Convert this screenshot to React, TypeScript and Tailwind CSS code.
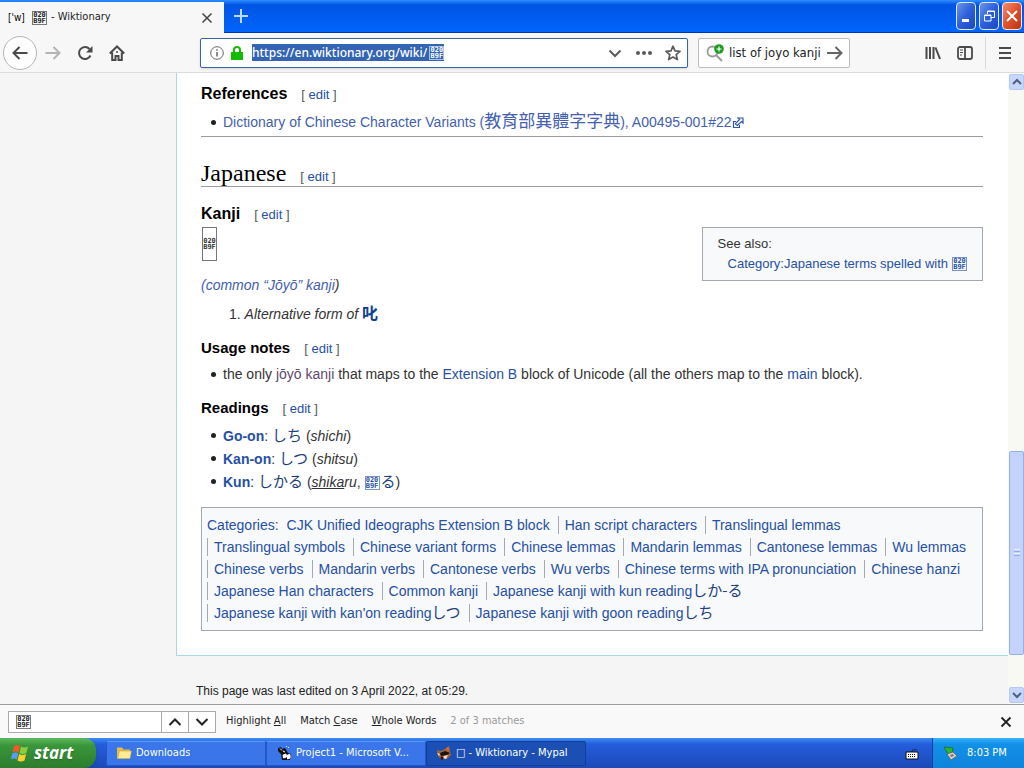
import clsx from "clsx";
import type { ReactNode } from "react";

const UI_FONT = "font-['DejaVu_Sans_Condensed','DejaVu_Sans',sans-serif]";

const CATEGORIES: { label: string; kana?: string }[] = [
  { label: "CJK Unified Ideographs Extension B block" },
  { label: "Han script characters" },
  { label: "Translingual lemmas" },
  { label: "Translingual symbols" },
  { label: "Chinese variant forms" },
  { label: "Chinese lemmas" },
  { label: "Mandarin lemmas" },
  { label: "Cantonese lemmas" },
  { label: "Wu lemmas" },
  { label: "Chinese verbs" },
  { label: "Mandarin verbs" },
  { label: "Cantonese verbs" },
  { label: "Wu verbs" },
  { label: "Chinese terms with IPA pronunciation" },
  { label: "Chinese hanzi" },
  { label: "Japanese Han characters" },
  { label: "Common kanji" },
  { label: "Japanese kanji with kun reading", kana: "しか-る" },
  { label: "Japanese kanji with kan'on reading", kana: "しつ" },
  { label: "Japanese kanji with goon reading", kana: "しち" },
];

// Hex box drawn for a code point that no font covers
function HexGlyph({ className }: { className?: string }) {
  return (
    <span
      className={clsx(
        "inline-flex h-[14px] w-[15px] shrink-0 flex-col items-center justify-center border border-current/60 font-['DejaVu_Sans_Mono',monospace] text-[7px] font-bold not-italic leading-[6px]",
        className,
      )}
    >
      <span>020</span>
      <span>B9F</span>
    </span>
  );
}

function Link({ children, className }: { children: ReactNode; className?: string }) {
  return (
    <a href="#" className={clsx(className ?? "text-[#2650a4]")}>
      {children}
    </a>
  );
}

function Edit() {
  return (
    <span className="font-['Liberation_Sans',Arial,sans-serif] text-[13px] font-normal text-[#54595d]">
      [ <Link>edit</Link> ]
    </span>
  );
}

function Heading({ children, className }: { children: ReactNode; className?: string }) {
  return (
    <h3 className={clsx("flex h-[26px] items-baseline gap-[14px] font-bold leading-[26px] text-black", className)}>
      {children}
      <Edit />
    </h3>
  );
}

function Bullet({ children, className = "h-[22px]" }: { children: ReactNode; className?: string }) {
  return (
    <li className={clsx("flex items-center", className)}>
      <span className="mr-[7px] ml-[10px] size-[5px] rounded-full bg-[#202122]" />
      <div>{children}</div>
    </li>
  );
}

function Kana({ children }: { children: ReactNode }) {
  return <span className="font-['Noto_Sans_CJK_JP',sans-serif] text-[15px] leading-none text-[#1d3f80]">{children}</span>;
}

function TabStrip() {
  return (
    <div className="flex h-[33px] shrink-0 bg-linear-to-b from-[#2f8cff] via-[#0054e3] via-15% to-[#0066ff]">
      <div className="mt-[2px] flex w-56 items-center bg-[#f7f7f8] px-2 text-[11px] text-[#222]">
        <span className="w-4 text-[10px] whitespace-nowrap text-black">['w]</span>
        <HexGlyph className="mr-1 ml-2" />
        <span>- Wiktionary</span>
        <button aria-label="Close tab" className="ml-auto">
          <svg viewBox="0 0 18 18" className="size-[18px]" fill="none" stroke="#444" strokeWidth="1.5">
            <path d="M4.500 4.500l9 9M13.500 4.500l-9 9" />
          </svg>
        </button>
      </div>
      <div className="flex flex-1 border-b border-[#0038a8] pl-2">
        <button aria-label="New tab">
          <svg viewBox="0 0 18 18" className="size-[18px]" fill="none" stroke="#b9dcff" strokeWidth="2">
            <path d="M9 2v14M2 9h14" />
          </svg>
        </button>
        <div className="ml-auto flex gap-[3px] pt-[2px] pr-[2px]">
          <button aria-label="Minimize" className="h-7 w-5 rounded border border-[#dfe9ff] bg-linear-to-br from-[#6c94ee] via-[#2b5fd9] to-[#1c48c4]">
            <svg viewBox="0 0 18 26"><path d="M5 16h7v3H5z" fill="#fff" /></svg>
          </button>
          <button aria-label="Restore" className="h-7 w-5 rounded border border-[#dfe9ff] bg-linear-to-br from-[#6c94ee] via-[#2b5fd9] to-[#1c48c4]">
            <svg viewBox="0 0 18 26" fill="none" stroke="#fff">
              <path d="M7.500 11V8h7v6.500H11M7 8.500h8M4.500 12h6.500v6H4.500zM4 12.500h7" />
            </svg>
          </button>
          <button aria-label="Close" className="h-7 w-5 rounded border border-[#ffe4dc] bg-linear-to-br from-[#ee8b6c] via-[#e0512b] to-[#b83410]">
            <svg viewBox="0 0 18 26" fill="none" stroke="#fff" strokeWidth="2">
              <path d="M4 8l10 10M14 8L4 18" />
            </svg>
          </button>
        </div>
      </div>
    </div>
  );
}

function NavBar() {
  return (
    <div className="flex h-10 shrink-0 items-center border-b border-[#dcdcdc] bg-[#f7f7f8] pr-3 pl-[3px] text-[#4a4a4a]">
      <button aria-label="Back" className="flex size-[34px] items-center justify-center rounded-full border border-[#b5b5b5] bg-[#fdfdfd]">
        <svg viewBox="0 0 16 16" className="size-4" fill="none" stroke="currentColor" strokeWidth="2">
          <path d="M15.500 8H1.500M7.500 2L1.500 8l6 6" />
        </svg>
      </button>
      <div className="ml-2 flex gap-4">
        <button aria-label="Forward" className="text-[#b4b4b4]">
          <svg viewBox="0 0 16 16" className="size-4" fill="none" stroke="currentColor" strokeWidth="2">
            <path d="M.5 8h14M8.500 2l6 6-6 6" />
          </svg>
        </button>
        <button aria-label="Reload">
          <svg viewBox="0 0 16 16" className="size-4" fill="none" stroke="currentColor" strokeWidth="2">
            <path d="M13.500 10.500A6 6 0 1 1 12.500 4" />
            <path d="M15.500 1v6.500H9z" fill="currentColor" stroke="none" />
          </svg>
        </button>
        <button aria-label="Home">
          <svg viewBox="0 0 16 16" className="size-4" fill="none" stroke="currentColor" strokeWidth="2">
            <path d="M.8 8.500L8 1.500l7.200 7M3.200 7.500V15h3.300v-4h3v4h3.300V7.500" />
            <path d="M7 7h2" strokeWidth="1.500" />
          </svg>
        </button>
      </div>
      <div className="ml-[75px] flex h-[30px] flex-1 items-center rounded-xs border border-[#3465a8] bg-white pr-1.5 pl-[9px] shadow-sm">
        <svg viewBox="0 0 14 14" className="size-[14px]" fill="none" stroke="#666">
          <circle cx="7" cy="7" r="6.300" />
          <path d="M7 6v4.500M7 3.200v1.600" strokeWidth="1.500" />
        </svg>
        <svg viewBox="0 0 12 14" className="mr-[9px] ml-[7px] h-[14px] w-3">
          <path d="M0 6h12v8H0z" fill="#12bc00" />
          <path d="M3 7V4a3 3 0 0 1 6 0v3" fill="none" stroke="#12bc00" strokeWidth="2" />
        </svg>
        <input
          aria-label="Address"
          defaultValue="https://en.wiktionary.org/wiki/"
          className="field-sizing-content h-[17px] bg-[#3464b4] font-['Noto_Sans',sans-serif] text-xs font-medium text-white outline-none"
        />
        <span className="flex h-[17px] items-center bg-[#3464b4] pl-0.5 text-white">
          <HexGlyph />
        </span>
        <div className="ml-auto flex items-center gap-3 text-[#5a5a5a]">
          <button aria-label="Show history">
            <svg viewBox="0 0 16 16" className="size-4" fill="none" stroke="currentColor" strokeWidth="2">
              <path d="M2.500 5.500L8 11l5.500-5.500" />
            </svg>
          </button>
          <button aria-label="Page actions">
            <svg viewBox="0 0 18 16" className="h-4 w-[18px]" fill="currentColor">
              <circle cx="3" cy="8" r="2" />
              <circle cx="9" cy="8" r="2" />
              <circle cx="15" cy="8" r="2" />
            </svg>
          </button>
          <button aria-label="Bookmark this page">
            <svg viewBox="0 0 16 16" className="size-4" fill="none" stroke="currentColor" strokeWidth="1.700" strokeLinejoin="round">
              <path d="M8 1.200l2 4.600 5 .5-3.800 3.300 1.200 5L8 12l-4.400 2.600 1.200-5L1 6.300l5-.5z" />
            </svg>
          </button>
        </div>
      </div>
      <div className="ml-[10px] flex h-[30px] w-[152px] items-center rounded-xs border border-[#bdbdbd] bg-white px-1.5">
        <svg viewBox="0 0 20 18" className="h-[18px] w-5 shrink-0" fill="none">
          <circle cx="7.500" cy="7.500" r="5" stroke="#999" strokeWidth="1.800" />
          <path d="M11 11l6 6" stroke="#999" strokeWidth="2" />
          <circle cx="14" cy="5" r="4.800" fill="#1f9b1f" />
          <path d="M14 2.500v5M11.500 5h5" stroke="#fff" strokeWidth="1.200" />
        </svg>
        <input aria-label="Search" defaultValue="list of joyo kanji" className="ml-1 w-0 flex-1 text-[13px] text-[#222] outline-none" />
        <button aria-label="Go" className="text-[#666]">
          <svg viewBox="0 0 16 16" className="size-4" fill="none" stroke="currentColor" strokeWidth="2">
            <path d="M0 8h14.500M8.500 2l6 6-6 6" />
          </svg>
        </button>
      </div>
      <button aria-label="Library" className="ml-[75px]">
        <svg viewBox="0 0 16 16" className="size-4" fill="none" stroke="currentColor" strokeWidth="2">
          <path d="M1.500 2v12M5 2v12M8.500 2v12M10.500 2.500L15 14" />
        </svg>
      </button>
      <button aria-label="Sidebars" className="ml-4">
        <svg viewBox="0 0 16 16" className="size-4" fill="none" stroke="currentColor" strokeWidth="1.800">
          <rect x="1" y="2" width="14" height="12" rx="2" />
          <path d="M8 2v12" />
          <path d="M3 5h3M3 7.500h3M3 10h2" strokeWidth="1" />
        </svg>
      </button>
      <div className="mx-3 h-8 w-px bg-[#dadada]" />
      <button aria-label="Open menu">
        <svg viewBox="0 0 14 16" className="h-4 w-[14px]" fill="none" stroke="currentColor" strokeWidth="2">
          <path d="M1 3h12M1 8h12M1 13h12" />
        </svg>
      </button>
    </div>
  );
}

function Article() {
  return (
    <main className="border-b border-l border-[#a7d7e9] bg-white pt-2 pr-[25px] pb-6 pl-6 text-sm leading-[22px] text-[#333]">
      <Heading className="text-base">References</Heading>
      <ul className="mt-1">
        <Bullet>
          <Link className="text-[#4460ae]">
            Dictionary of Chinese Character Variants (
            <span className="font-['Noto_Sans_CJK_TC',sans-serif] text-[17px] leading-none">教育部異體字字典</span>), A00495-001#22
            <svg viewBox="0 0 12 12" className="inline size-3" fill="none" stroke="#2f58b4" strokeWidth="1.200">
              <path d="M4 4.500H1.500v6h6V8" />
              <path d="M4 7.500l1.500 1 4-4L11 6V1H6l1.500 1.500-4 4z" />
            </svg>
          </Link>
        </Bullet>
      </ul>
      <hr className="mt-[3px] border-[#9a9da3]" />
      <h2 className="mt-6 flex h-[26px] items-baseline gap-[14px] border-b border-[#9a9da3] font-['Liberation_Serif',serif] text-2xl leading-[25px] text-black">
        Japanese
        <Edit />
      </h2>
      <Heading className="mt-[14px] text-base">Kanji</Heading>
      <div className="flex h-[34px] items-start justify-between">
        <div className="ml-px flex h-full w-[15px] items-center justify-center border border-[#777]">
          <HexGlyph className="border-none" />
        </div>
        <aside className="border border-[#a2a9b1] bg-[#f8f9fa] px-[15px] py-1.5 text-[13px] leading-5">
          <p>See also:</p>
          <p className="flex items-center gap-1 pl-[10px] text-[#2650a4]">
            <Link>Category:Japanese terms spelled with</Link>
            <HexGlyph />
          </p>
        </aside>
      </div>
      <p className="mt-[13px] italic">
        <Link className="text-[#4460ae]">(common “Jōyō” kanji</Link>)
      </p>
      <ol className="mt-[7px] list-inside list-decimal pl-7">
        <li className="h-[22px]">
          <i>Alternative form of</i>{" "}
          <Link className="font-['Noto_Sans_CJK_JP',sans-serif] text-base font-bold leading-none text-[#123f94]">叱</Link>
        </li>
      </ol>
      <Heading className="mt-[10px] text-[15px]">Usage notes</Heading>
      <ul className="mt-[2px]">
        <Bullet>
          the only <Link className="text-[#5e4a70]">jōyō kanji</Link> that maps to the <Link>Extension B</Link> block of Unicode (all the
          others map to the <Link>main</Link> block).
        </Bullet>
      </ul>
      <Heading className="mt-[10px] text-[15px]">Readings</Heading>
      <ul className="mt-[3px]">
        <Bullet className="h-[23px]">
          <Link className="font-bold text-[#2650a4]">Go-on</Link>: <Link><Kana>しち</Kana></Link> (<i>shichi</i>)
        </Bullet>
        <Bullet className="h-[23px]">
          <Link className="font-bold text-[#2650a4]">Kan-on</Link>: <Link><Kana>しつ</Kana></Link> (<i>shitsu</i>)
        </Bullet>
        <Bullet className="h-[23px]">
          <Link className="font-bold text-[#2650a4]">Kun</Link>: <Link><Kana>しかる</Kana></Link> (<i><u>shika</u>ru</i>,{" "}
          <Link><HexGlyph className="mr-px align-middle" /><Kana>る</Kana></Link>)
        </Bullet>
      </ul>
      <div className="mt-[14px] border border-[#a2a9b1] bg-[#f8f9fa] px-[5px] py-1.5">
        <ul className="flex flex-wrap items-center gap-x-2">
          <li><Link>Categories:</Link></li>
          {CATEGORIES.map((c, i) => (
            <li key={c.label} className={clsx("flex h-[22px] items-center", i > 0 && "before:mr-1.5 before:h-[18px] before:w-px before:bg-[#a2a9b1]")}>
              <Link>
                {c.label}
                {c.kana && <Kana>{c.kana}</Kana>}
              </Link>
            </li>
          ))}
        </ul>
      </div>
    </main>
  );
}

function ScrollBar() {
  return (
    <div className="flex w-4 shrink-0 flex-col bg-[#f9f9f4] py-px pl-px">
      <button aria-label="Scroll up" className="flex h-4 items-center justify-center rounded-xs border border-[#b4c8f6] bg-[#c8d6fb]">
        <svg viewBox="0 0 10 8" className="h-2 w-[10px]" fill="none" stroke="#4d6185" strokeWidth="2"><path d="M1 6l4-4 4 4" /></svg>
      </button>
      <div className="flex-[362]" />
      <div className="flex flex-[203] flex-col items-center justify-center gap-px rounded-xs border border-[#98b0e8] bg-[#c5d2fb]">
        <span className="h-px w-1.5 bg-[#eef4fe]" />
        <span className="h-px w-1.5 bg-[#8cb0f8]" />
        <span className="h-px w-1.5 bg-[#eef4fe]" />
        <span className="h-px w-1.5 bg-[#8cb0f8]" />
      </div>
      <div className="flex-[32]" />
      <button aria-label="Scroll down" className="flex h-4 items-center justify-center rounded-xs border border-[#b4c8f6] bg-[#c8d6fb]">
        <svg viewBox="0 0 10 8" className="h-2 w-[10px]" fill="none" stroke="#4d6185" strokeWidth="2"><path d="M1 2l4 4 4-4" /></svg>
      </button>
    </div>
  );
}

function FindBar() {
  return (
    <div className="flex h-[34px] shrink-0 items-center border-t border-[#9c9c9c] bg-[#f9f9fa] pr-[11px] pl-2 text-[11px] text-[#222]">
      <div className="flex h-[22px] border border-[#aaa] bg-white">
        <label className="flex w-[152px] items-center pl-[7px]">
          <HexGlyph />
          <input aria-label="Find in page" className="w-0 flex-1 outline-none" />
        </label>
        <button aria-label="Previous" className="flex w-[27px] items-center justify-center border-l border-[#aaa]">
          <svg viewBox="0 0 14 8" className="h-2 w-[14px]" fill="none" stroke="#222" strokeWidth="2"><path d="M1.500 7L7 1.500 12.500 7" /></svg>
        </button>
        <button aria-label="Next" className="flex w-[27px] items-center justify-center border-l border-[#aaa]">
          <svg viewBox="0 0 14 8" className="h-2 w-[14px]" fill="none" stroke="#222" strokeWidth="2"><path d="M1.500 1L7 6.500 12.500 1" /></svg>
        </button>
      </div>
      <div className="ml-[10px] flex gap-[14px]">
        <button>Highlight <u>A</u>ll</button>
        <button>Match <u>C</u>ase</button>
        <button><u>W</u>hole Words</button>
        <span className="text-[#999]">2 of 3 matches</span>
      </div>
      <button aria-label="Close find bar" className="ml-auto">
        <svg viewBox="0 0 14 14" className="size-[14px]" fill="none" stroke="#222" strokeWidth="1.800"><path d="M2.500 2.500l9 9M11.500 2.500l-9 9" /></svg>
      </button>
    </div>
  );
}

function TaskButton({ icon, children, active }: { icon: ReactNode; children: ReactNode; active?: boolean }) {
  return (
    <button
      className={clsx(
        "flex h-[25px] w-40 items-center gap-1 rounded-xs border px-[9px] text-left whitespace-nowrap",
        active ? "border-[#123e9a] bg-[#1c4fb4]" : "border-[#2457c4] border-t-[#5c96fb] bg-[#3a76ea]",
      )}
    >
      {icon}
      <span className="truncate">{children}</span>
    </button>
  );
}

function TaskBar() {
  return (
    <div className="flex h-[30px] shrink-0 items-center bg-linear-to-b from-[#3f8cf3] via-[#245edc] via-20% to-[#1d49b8] text-[11px] text-white">
      <button className="flex h-full w-24 items-center gap-[5px] rounded-r-xl bg-linear-to-b from-[#5eb85e] via-[#3a963a] via-25% to-[#2c7d2c] pl-[11px] font-['Open_Sans',sans-serif] text-[17px] font-bold italic shadow-md text-shadow-sm">
        <svg viewBox="0 0 18 18" className="size-[18px]">
          <path d="M3 2q3-2 6 0L7.500 8.500q-3-2-6 0z" fill="#f0592a" />
          <path d="M10 2.500q3 2 7 0L15.300 9q-4 2-6.800 0z" fill="#8ccf3d" />
          <path d="M1.300 9.500q3-2 6 0L5.800 15.500q-3-2-6 0z" fill="#5a9bf5" />
          <path d="M8.200 10q3 2 6.900 0L13.500 16.500q-4 2-7 0z" fill="#fcd02e" />
        </svg>
        start
      </button>
      <div className="ml-[10px] flex">
        <TaskButton
          icon={
            <svg viewBox="0 0 16 16" className="size-4 shrink-0">
              <path d="M1 2.500h5l1.500 2H14v9H1z" fill="#e8bd45" />
              <path d="M1.500 13.500L3.500 6H15.500L14 13.500z" fill="#fdec94" stroke="#c9992e" strokeWidth=".5" />
            </svg>
          }
        >
          Downloads
        </TaskButton>
        <TaskButton
          icon={
            <svg viewBox="0 0 16 16" className="size-4 shrink-0">
              <path d="M2 3l3-1 1 2 3-1 3 5 3 1-1 6H6L5 9 2 6z" fill="#111" />
              <path d="M4 3.500l2 2M7 10l3-1 .5 3-3 1zM11.500 10l2.500-.5V13l-2.500 1zM7 6l2 1" stroke="#fff" fill="#fff" />
              <path d="M12 2l1 1M10 1l1 1" stroke="#eee" />
            </svg>
          }
        >
          Project1 - Microsoft V...
        </TaskButton>
        <TaskButton
          active
          icon={
            <svg viewBox="0 0 16 16" className="size-4 shrink-0">
              <path d="M1 5l4 1 4-2 4-3 1 5 1 4-4 4H5L2 11z" fill="#a4643a" />
              <path d="M4 8l5-2 5 2-3 2-6 1z" fill="#1c1310" />
              <path d="M1 8l3 1-1 2zM8 11l4-1-2 4-3-1z" fill="#f3ddc4" />
              <path d="M12 2l1 3-3-1z" fill="#f06a50" />
              <circle cx="6" cy="13" r="1.500" fill="#1c1310" />
            </svg>
          }
        >
          □ - Wiktionary - Mypal
        </TaskButton>
      </div>
      <svg viewBox="0 0 14 14" className="mr-[13px] ml-auto size-[14px]">
        <path d="M1 6h12v7H1z" fill="#fff" stroke="#111" />
        <path d="M3 8.500h8M3 10.500h8" stroke="#111" strokeDasharray="1 1" />
        <path d="M7 6V4h4V2" stroke="#111" fill="none" strokeDasharray="1 1" />
      </svg>
      <div className="flex h-full w-[92px] items-center gap-2 border-l border-[#0c3e9c] bg-linear-to-b from-[#35b4f8] via-[#1290e8] via-20% to-[#0f84dc] pl-[10px]">
        <svg viewBox="0 0 16 16" className="size-4">
          <path d="M1 2l9 1-1 5-4 1z" fill="#2db52d" stroke="#156b1b" strokeWidth=".7" />
          <path d="M4 9l6-2 4 4-6 4z" fill="#d5d5c8" stroke="#555" strokeWidth=".7" />
          <path d="M7 10l3-1 1 2-3 1z" fill="#777" />
        </svg>
        8:03 PM
      </div>
    </div>
  );
}

export default function App() {
  return (
    <div className={clsx("flex h-screen flex-col overflow-hidden", UI_FONT)}>
      <TabStrip />
      <NavBar />
      <div className="flex min-h-0 flex-1">
        <div className="min-w-0 flex-1 overflow-hidden bg-[#f5f5f5] pl-44 font-['Liberation_Sans',Arial,sans-serif]">
          <Article />
          <footer className="px-5 pt-[26px] text-xs leading-[18px] text-[#202122]">
            This page was last edited on 3 April 2022, at 05:29.
          </footer>
        </div>
        <ScrollBar />
      </div>
      <FindBar />
      <TaskBar />
    </div>
  );
}
